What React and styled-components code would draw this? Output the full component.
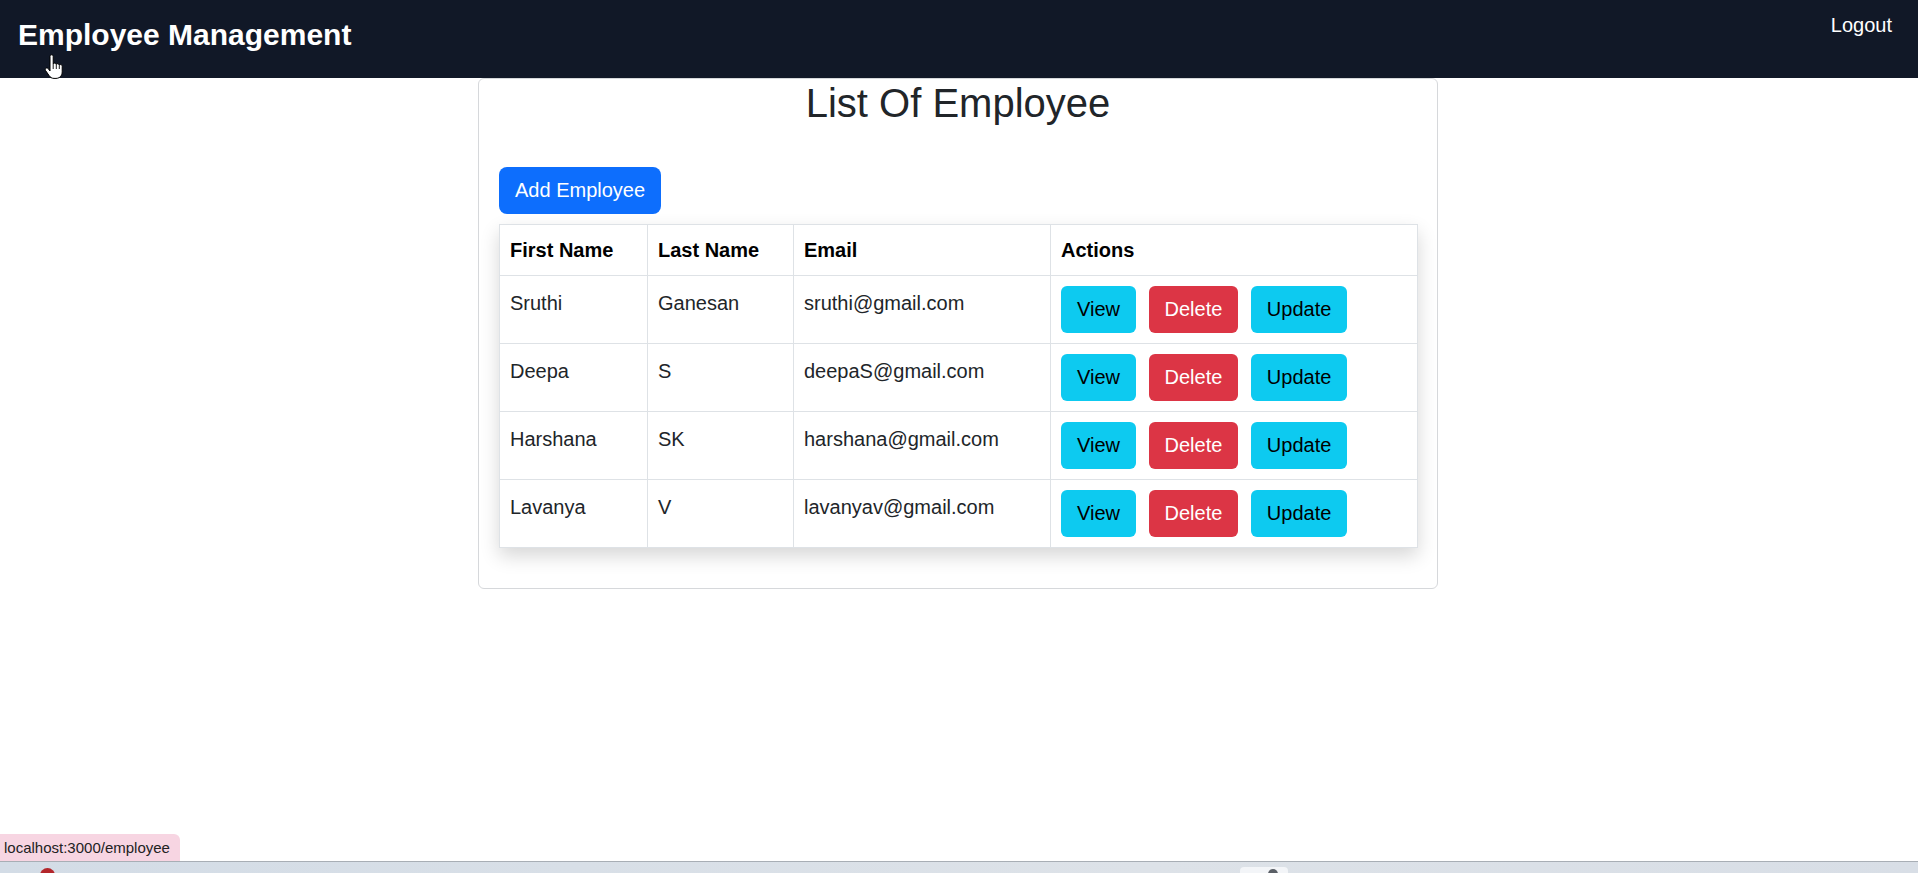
import React from "react";
import styled, { createGlobalStyle } from "styled-components";

const GlobalStyle = createGlobalStyle`
  html, body {
    margin: 0;
    padding: 0;
    height: 100%;
    overflow: hidden;
    background: #fff;
    font-family: "Liberation Sans", Arial, sans-serif;
    color: #212529;
  }
  * {
    box-sizing: border-box;
  }
`;

// data
const employees = [
  { first: "Sruthi", last: "Ganesan", email: "sruthi@gmail.com" },
  { first: "Deepa", last: "S", email: "deepaS@gmail.com" },
  { first: "Harshana", last: "SK", email: "harshana@gmail.com" },
  { first: "Lavanya", last: "V", email: "lavanyav@gmail.com" },
];

const colWidths = [148, 146, 257, 367];

const btnColors = {
  primary: { bg: "#0d6efd", fg: "#fff" },
  info: { bg: "#0dcaf0", fg: "#000" },
  danger: { bg: "#dc3545", fg: "#fff" },
};

// styled
const Page = styled.div`
  position: relative;
  height: 100vh;
  display: flex;
  flex-direction: column;
`;

const NavBar = styled.header`
  height: 78px;
  flex-shrink: 0;
  background: #111827;
  display: flex;
  justify-content: space-between;
  align-items: flex-start;
  padding: 0 26px 0 18px;
`;

const Brand = styled.h1`
  margin: 20px 0 0;
  font-size: 30px;
  line-height: 1;
  font-weight: 700;
  color: #fff;
`;

const NavLink = styled.a`
  margin-top: 15px;
  font-size: 20px;
  line-height: 1;
  color: #fff;
  text-decoration: none;
  cursor: pointer;
`;

const Main = styled.main`
  flex: 1;
`;

const Card = styled.section`
  width: 960px;
  margin: 0 auto;
  border: 1px solid #d6d8db;
  border-radius: 6px;
  padding: 0 20px 40px;
  transform: translateX(-1px);
`;

const Title = styled.h2`
  margin: 0;
  text-align: center;
  font-size: 40px;
  line-height: 1.2;
  font-weight: 400;
  color: #212529;
`;

const Button = styled.button`
  border: none;
  border-radius: ${(p) => (p.$large ? "8px" : "6px")};
  background: ${(p) => btnColors[p.$variant].bg};
  color: ${(p) => btnColors[p.$variant].fg};
  font-family: inherit;
  font-size: 20px;
  height: 47px;
  padding: 0 16px;
  cursor: pointer;
`;

const Toolbar = styled.div`
  margin-top: 40px;
  display: flex;
`;

const Table = styled.table`
  margin-top: 10px;
  width: 100%;
  border-collapse: collapse;
  table-layout: fixed;
  box-shadow: 0 8px 18px rgba(0, 0, 0, 0.16);
  font-size: 20px;
`;

const Th = styled.th`
  border: 1px solid #dee2e6;
  padding: 10px;
  line-height: 30px;
  text-align: left;
  font-weight: 700;
  color: #000;
`;

const Td = styled.td`
  border: 1px solid #dee2e6;
  padding: 10px;
  line-height: 34px;
  vertical-align: top;
  color: #212529;
`;

const Actions = styled.div`
  display: flex;
  gap: 12.5px;
`;

const StatusTip = styled.div`
  position: absolute;
  left: 0;
  bottom: 12px;
  width: 180px;
  height: 27px;
  padding-left: 4px;
  background: #f7d5e2;
  border-top-right-radius: 6px;
  font-size: 15px;
  line-height: 27px;
  color: #222;
`;

const Taskbar = styled.footer`
  position: relative;
  height: 12px;
  flex-shrink: 0;
  background: linear-gradient(90deg, #d3dce6, #dde2e8 60%, #d8dee6);
  border-top: 1px solid #a8aeb5;
  overflow: hidden;
`;

const TaskDot = styled.span`
  position: absolute;
  top: 6px;
  left: ${(p) => p.$left}px;
  width: 15px;
  height: 15px;
  border-radius: 50%;
  background: #b3262b;
`;

const TaskTab = styled.span`
  position: absolute;
  top: 5px;
  left: ${(p) => p.$left}px;
  width: 48px;
  height: 14px;
  border-radius: 4px;
  background: #f3f5f8;
  &::after {
    content: "";
    position: absolute;
    top: 2px;
    left: 28px;
    width: 10px;
    height: 10px;
    border-radius: 50%;
    background: #5a5f66;
  }
`;

const Pointer = styled.svg`
  position: absolute;
  left: 44px;
  top: 54px;
  pointer-events: none;
`;

const HandCursor = () => (
  <Pointer width="22" height="26" viewBox="0 0 22 26">
    <path
      d="M6 2.5c0-1 .7-1.7 1.6-1.7S9.2 1.5 9.2 2.5V10c.3-.6.9-.9 1.5-.9.9 0 1.5.6 1.6 1.4.3-.5.8-.8 1.4-.8.9 0 1.5.6 1.6 1.5.3-.4.8-.6 1.3-.6 1 0 1.6.8 1.6 1.8v5.4c0 3.9-2.6 6.6-6.2 6.6H10c-2.3 0-3.6-1-4.9-2.8L1.6 16.6c-.6-.9-.4-1.9.4-2.4.8-.5 1.7-.2 2.3.5L6 17V2.5z"
      fill="#fff"
      stroke="#000"
      strokeWidth="1"
      strokeLinejoin="round"
    />
    <path d="M9.2 10v5M12.3 10.6V15M15.3 11.3V15" stroke="#000" strokeWidth="0.9" />
  </Pointer>
);

const App = () => {
  return (
    <Page>
      <GlobalStyle />
      <NavBar>
        <Brand>Employee Management</Brand>
        <NavLink>Logout</NavLink>
      </NavBar>
      <Main>
        <Card>
          <Title>List Of Employee</Title>
          <Toolbar>
            <Button $variant="primary" $large>
              Add Employee
            </Button>
          </Toolbar>
          <Table>
            <colgroup>
              {colWidths.map((w, i) => (
                <col key={i} style={{ width: w }} />
              ))}
            </colgroup>
            <thead>
              <tr>
                <Th>First Name</Th>
                <Th>Last Name</Th>
                <Th>Email</Th>
                <Th>Actions</Th>
              </tr>
            </thead>
            <tbody>
              {employees.map((e) => (
                <tr key={e.email}>
                  <Td>{e.first}</Td>
                  <Td>{e.last}</Td>
                  <Td>{e.email}</Td>
                  <Td>
                    <Actions>
                      <Button $variant="info">View</Button>
                      <Button $variant="danger">Delete</Button>
                      <Button $variant="info">Update</Button>
                    </Actions>
                  </Td>
                </tr>
              ))}
            </tbody>
          </Table>
        </Card>
      </Main>
      <Taskbar>
        <TaskDot $left={40} />
        <TaskTab $left={1240} />
      </Taskbar>
      <StatusTip>localhost:3000/employee</StatusTip>
      <HandCursor />
    </Page>
  );
};

export default App;
